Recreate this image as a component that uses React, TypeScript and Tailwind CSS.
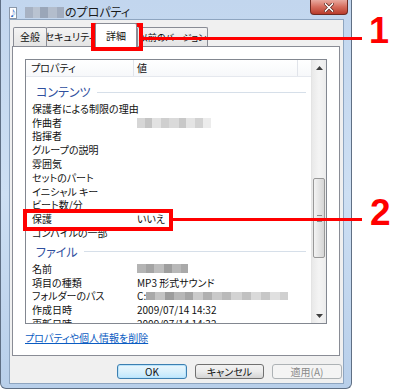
import React from "react";

type Cell = [number, string];

function Mosaic({ cells, className }: { cells: Cell[]; className: string }) {
  return (
    <div className={"flex " + className}>
      {cells.map(([w, c], i) => (
        <div key={i} style={{ width: w, background: c }} />
      ))}
    </div>
  );
}

function Row({ name, children }: { name: string; children?: React.ReactNode }) {
  return (
    <div className="flex h-[13.8px] items-center text-[10px] leading-none text-[#111]">
      <div className="w-[111px] shrink-0 whitespace-nowrap pl-[6px]">{name}</div>
      <div className="flex items-center whitespace-nowrap">{children}</div>
    </div>
  );
}

function Group({ label }: { label: string }) {
  return (
    <div className="flex h-[22px] items-center pl-[10px] pr-[5px] pt-[2px]">
      <span className="whitespace-nowrap text-[12px] leading-none text-[#2f4f9e]">{label}</span>
      <div className="ml-[6px] h-px flex-1 bg-[#d6dfe9]" />
    </div>
  );
}

function Tab({ label, className }: { label: string; className: string }) {
  return (
    <div
      className={
        "flex items-center justify-center overflow-hidden whitespace-nowrap rounded-t-[2px] border border-b-0 border-[#898c95] leading-none text-[#111] " +
        className
      }
    >
      {label}
    </div>
  );
}

function Button({ label, className }: { label: string; className: string }) {
  return (
    <div
      className={
        "flex h-[15px] items-center justify-center rounded-[3px] border text-[10px] leading-none " + className
      }
    >
      {label}
    </div>
  );
}

export default function App() {
  const composer: Cell[] = [
    [8, "#d6d6d6"],
    [7, "#c4c4c4"],
    [9, "#e2e2e2"],
    [8, "#cfcfcf"],
    [10, "#dadada"],
    [7, "#c8c8c8"],
    [9, "#e4e4e4"],
    [8, "#d2d2d2"],
    [8, "#ececec"],
  ];
  const nameCells: Cell[] = [
    [9, "#b4b4b4"],
    [8, "#a4a4a4"],
    [10, "#bdbdbd"],
    [8, "#9e9e9e"],
    [9, "#b8b8b8"],
    [7, "#a9a9a9"],
  ];
  const pathCells: Cell[] = [
    [9, "#a9a9a9"],
    [10, "#c4c4c4"],
    [9, "#9d9d9d"],
    [11, "#b7b7b7"],
    [8, "#a5a5a5"],
    [10, "#cbcbcb"],
    [9, "#b0b0b0"],
    [10, "#c9c9c9"],
    [9, "#bababa"],
    [11, "#d3d3d3"],
    [9, "#c1c1c1"],
    [10, "#dadada"],
    [9, "#c7c7c7"],
    [10, "#e0e0e0"],
    [8, "#d0d0d0"],
  ];
  const titleCells: Cell[] = [
    [8, "#a7b2c3"],
    [7, "#b9c3d1"],
    [8, "#9aa6b8"],
    [9, "#b3bdcc"],
    [7, "#a2adbf"],
  ];

  return (
    <div className="relative h-[390px] w-[400px] overflow-hidden bg-white font-['Noto_Sans_CJK_JP',sans-serif] [font-feature-settings:'palt']">
      {/* window */}
      <div className="flex h-[389px] w-[352px] flex-col rounded-b-[6px] border-x border-b border-[#5f6f84] bg-gradient-to-b from-[#c2d6ee] via-[#cddff3] to-[#b8cfea] pb-[4px] pl-[8px] pr-[7px]">
        {/* title bar */}
        <div className="-ml-[8px] -mr-[7px] flex h-[19px] items-start">
          <div className="ml-[8px] mt-[7px] flex h-[12px] w-[8px] items-center justify-center border border-[#8a97a8] bg-white">
            <span className="text-[8px] leading-none text-[#2c66c4]">♪</span>
          </div>
          <Mosaic cells={titleCells} className="ml-[8px] mt-[7px] h-[11px]" />
          <span className="ml-[1px] mt-[5px] whitespace-nowrap text-[12px] leading-[14px] text-[#1a1a1a]">のプロパティ</span>
          <div className="ml-auto mr-[3px] flex h-[15px] w-[38px] items-center justify-center rounded-b-[4px] border border-t-0 border-[#6e2a22] bg-gradient-to-b from-[#e8a99f] via-[#d56b5c] to-[#b83b2b]">
            <svg width="10" height="9" viewBox="0 0 10 9">
              <path d="M1.5 1 L8.5 8 M8.5 1 L1.5 8" stroke="#5a2018" strokeWidth="3" strokeLinecap="square" />
              <path d="M1.5 1 L8.5 8 M8.5 1 L1.5 8" stroke="#ffffff" strokeWidth="1.6" strokeLinecap="square" />
            </svg>
          </div>
        </div>

        {/* client area */}
        <div className="flex flex-1 flex-col border border-[#8ea5c0] bg-[#f0f0f0]">
          {/* tabs */}
          <div className="mt-[3px] flex h-[23px] items-end pl-[3px]">
            <Tab label="全般" className="h-[19px] w-[34px] bg-gradient-to-b from-[#f4f4f4] to-[#e4e4e4] text-[10px]" />
            <Tab label="セキュリティ" className="-ml-px h-[19px] w-[49px] bg-gradient-to-b from-[#f4f4f4] to-[#e4e4e4] text-[10px]" />
            <Tab label="詳細" className="relative z-10 -mb-px h-[24px] w-[42px] bg-white text-[10px]" />
            <Tab label="以前のバージョン" className="h-[19px] w-[71px] bg-gradient-to-b from-[#f4f4f4] to-[#e4e4e4] text-[9px]" />
          </div>

          {/* panel */}
          <div className="ml-[2px] flex h-[310px] w-[328px] flex-col border border-[#898c95] bg-white pl-[12px] pt-[12px]">
            {/* list */}
            <div className="flex h-[265px] w-[302px] border border-[#828790] bg-white">
              <div className="flex flex-1 flex-col overflow-hidden">
                <div className="flex h-[17px] shrink-0 border-b border-[#e5e8ee] bg-gradient-to-b from-white to-[#f7f8fa] text-[10px] leading-none text-[#111]">
                  <div className="flex w-[108px] items-center border-r border-[#e1e4ea] pl-[5px]">プロパティ</div>
                  <div className="flex w-[164px] items-center border-r border-[#e1e4ea] pl-[3px]">値</div>
                  <div className="flex-1" />
                </div>
                <div className="min-h-0 flex-1 overflow-hidden pt-[3px]">
                  <Group label="コンテンツ" />
                  <Row name="保護者による制限の理由" />
                  <Row name="作曲者">
                    <Mosaic cells={composer} className="h-[10px]" />
                  </Row>
                  <Row name="指揮者" />
                  <Row name="グループの説明" />
                  <Row name="雰囲気" />
                  <Row name="セットのパート" />
                  <Row name="イニシャル キー" />
                  <Row name="ビート数/分" />
                  <Row name="保護">いいえ</Row>
                  <Row name="コンパイルの一部" />
                  <Group label="ファイル" />
                  <Row name="名前">
                    <Mosaic cells={nameCells} className="h-[9px]" />
                  </Row>
                  <Row name="項目の種類">MP3 形式サウンド</Row>
                  <Row name="フォルダーのパス">
                    <span>C:</span>
                    <Mosaic cells={pathCells} className="h-[8px]" />
                  </Row>
                  <Row name="作成日時">2009/07/14 14:32</Row>
                  <Row name="更新日時">2009/07/14 14:32</Row>
                </div>
              </div>
              {/* scrollbar */}
              <div className="flex w-[15px] flex-col border-l border-[#e4e4e4] bg-gradient-to-r from-[#e9e9e9] via-[#f4f4f4] to-[#ececec]">
                <div className="flex h-[15px] items-center justify-center">
                  <svg width="7" height="4" viewBox="0 0 7 4">
                    <path d="M0 4 L3.5 0 L7 4 Z" fill="#3f3f3f" />
                  </svg>
                </div>
                <div className="flex-1">
                  <div className="mx-px mt-[103px] flex h-[80px] flex-col items-center justify-center gap-[2px] rounded-[2px] border border-[#989898] bg-gradient-to-r from-[#f3f3f3] to-[#d6d6d6]">
                    <div className="h-px w-[5px] bg-[#8a8a8a]" />
                    <div className="h-px w-[5px] bg-[#8a8a8a]" />
                    <div className="h-px w-[5px] bg-[#8a8a8a]" />
                  </div>
                </div>
                <div className="flex h-[15px] items-center justify-center">
                  <svg width="7" height="4" viewBox="0 0 7 4">
                    <path d="M0 0 L3.5 4 L7 0 Z" fill="#3f3f3f" />
                  </svg>
                </div>
              </div>
            </div>

            <div className="mt-[7px] flex h-[14px] items-center">
              <span className="whitespace-nowrap text-[10px] leading-none text-[#0b5cc2] underline">
                プロパティや個人情報を削除
              </span>
            </div>
          </div>

          {/* buttons */}
          <div className="mt-[8px] flex justify-end gap-[8px] pr-px">
            <Button
              label="OK"
              className="w-[70px] border-[#3c7fb1] bg-gradient-to-b from-[#eaf6fd] via-[#d9f0fc] to-[#bee6fd] text-[#111] shadow-[inset_0_0_0_1px_#b9e3fb]"
            />
            <Button
              label="キャンセル"
              className="w-[69px] border-[#707070] bg-gradient-to-b from-[#f2f2f2] via-[#ebebeb] to-[#d4d4d4] text-[#111]"
            />
            <Button label="適用(A)" className="w-[70px] border-[#adb2b5] bg-[#f4f4f4] text-[#8a8a8a]" />
          </div>
        </div>
      </div>

      {/* callout 1 */}
      <div className="absolute left-[91px] top-[23px] h-[28px] w-[52px] border-[4px] border-[#ff0000]" />
      <div className="absolute left-[143px] top-[37px] h-[3px] w-[219px] bg-[#ff0000]" />
      <div className="absolute left-[369px] top-[13px] font-['Liberation_Sans',sans-serif] text-[36px] font-bold leading-none text-[#ff0000]">
        1
      </div>

      {/* callout 2 */}
      <div className="absolute left-[23px] top-[209px] h-[22px] w-[150px] border-[4px] border-[#ff0000]" />
      <div className="absolute left-[173px] top-[218px] h-[3px] w-[189px] bg-[#ff0000]" />
      <div className="absolute left-[370px] top-[194px] font-['Liberation_Sans',sans-serif] text-[37px] font-bold leading-none text-[#ff0000]">
        2
      </div>
    </div>
  );
}
